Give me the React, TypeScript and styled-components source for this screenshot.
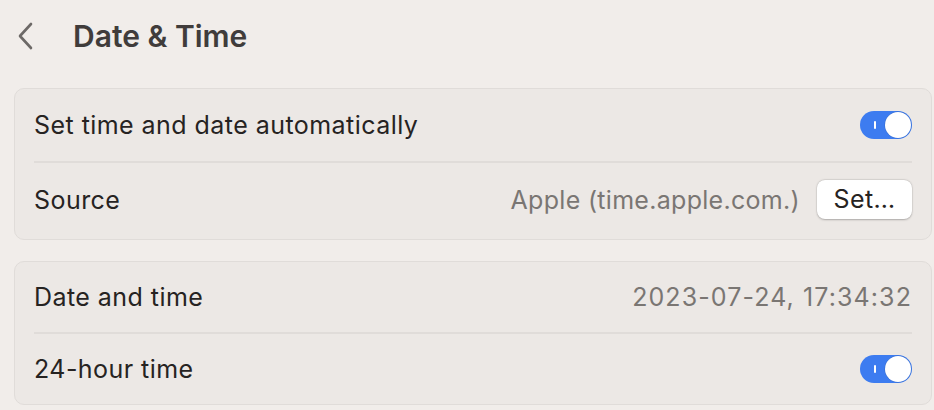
import React from "react";
import styled, { createGlobalStyle } from "styled-components";

const Global = createGlobalStyle`
  html, body { margin: 0; padding: 0; background: #f1edea; }
  body { font-family: Inter, "Noto Sans", sans-serif; -webkit-font-smoothing: antialiased; }
`;

const Page = styled.div`
  width: 934px;
  height: 410px;
  overflow: hidden;
  background: #f1edea;
  padding: 0 2px 0 14px;
  box-sizing: border-box;
`;

const Header = styled.div`
  display: flex;
  align-items: center;
  height: 72px;
  padding-left: 2px;
  gap: 38px;
`;

const BackButton = styled.div`
  width: 19px;
  height: 30px;
  display: flex;
  align-items: center;
  justify-content: center;
  margin-top: -1px;
`;

const Title = styled.h1`
  margin: 0;
  font-size: 30px;
  font-weight: 600;
  color: #403c3b;
  letter-spacing: 0px;
`;

const Card = styled.section<{ $mt: number }>`
  margin-top: ${(p) => p.$mt}px;
  background: #ece8e5;
  border: 1px solid #e0dcd9;
  border-radius: 10px;
  padding: 0 19px;
`;

const Row = styled.div<{ $h: number; $divider?: boolean; $lift?: number }>`
  display: flex;
  align-items: center;
  justify-content: space-between;
  box-sizing: border-box;
  height: ${(p) => p.$h}px;
  padding-bottom: ${(p) => p.$lift ?? 0}px;
  border-top: ${(p) => (p.$divider ? "2px solid #e0dcd9" : "none")};
`;

const Label = styled.span`
  font-size: 25px;
  color: #262322;
  letter-spacing: 0.45px;
`;

const Right = styled.div`
  display: flex;
  align-items: center;
  gap: 17px;
`;

const Value = styled.span<{ $spacing?: number }>`
  font-size: 25px;
  color: #7a7673;
  letter-spacing: ${(p) => p.$spacing ?? 0.3}px;
`;

const Button = styled.button`
  width: 95px;
  height: 39px;
  border: none;
  border-radius: 8px;
  background: #ffffff;
  box-shadow: 0 0.5px 2px rgba(0, 0, 0, 0.25), 0 0 0 0.5px rgba(0, 0, 0, 0.06);
  font-family: inherit;
  font-size: 25px;
  color: #262322;
  letter-spacing: 0.4px;
  padding: 0 0 2px;
`;

const Toggle = styled.div`
  position: relative;
  width: 52px;
  height: 28px;
  border-radius: 14px;
  background: #3d7cf0;
  box-sizing: border-box;
`;

const ToggleMark = styled.span`
  position: absolute;
  left: 14px;
  top: 10px;
  width: 2px;
  height: 8px;
  background: #ffffff;
  border-radius: 1px;
`;

const Knob = styled.span`
  position: absolute;
  right: 1px;
  top: 1px;
  width: 26px;
  height: 26px;
  border-radius: 50%;
  background: #ffffff;
  box-shadow: 0 0 0 0.5px rgba(0, 0, 0, 0.15);
`;

const Switch = () => (
  <Toggle>
    <ToggleMark />
    <Knob />
  </Toggle>
);

export default function App() {
  return (
    <Page>
      <Global />
      <Header>
        <BackButton>
          <svg width="17" height="28" viewBox="0 0 17 28">
            <path d="M14 2 L3 14 L14 26" fill="none" stroke="#6d6967" strokeWidth="2.6" strokeLinecap="round" strokeLinejoin="round" />
          </svg>
        </BackButton>
        <Title>Date &amp; Time</Title>
      </Header>
      <Card $mt={16}>
        <Row $h={72}>
          <Label>Set time and date automatically</Label>
          <Switch />
        </Row>
        <Row $h={78} $divider $lift={3}>
          <Label>Source</Label>
          <Right>
            <Value>Apple (time.apple.com.)</Value>
            <Button>Set…</Button>
          </Right>
        </Row>
      </Card>
      <Card $mt={21}>
        <Row $h={70}>
          <Label>Date and time</Label>
          <Value $spacing={1.1}>2023-07-24, 17:34:32</Value>
        </Row>
        <Row $h={72} $divider>
          <Label>24-hour time</Label>
          <Switch />
        </Row>
      </Card>
    </Page>
  );
}
